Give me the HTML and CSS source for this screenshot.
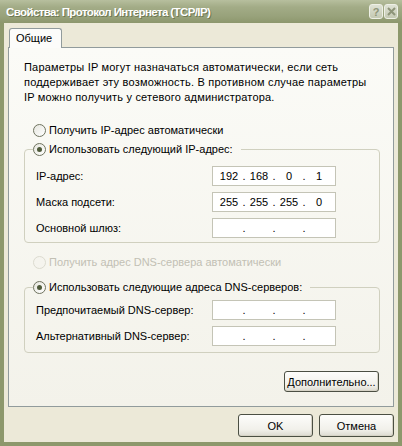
FILE: index.html
```html
<!DOCTYPE html>
<html lang="ru">
<head>
    <meta charset="UTF-8">
    <title>Свойства: Протокол Интернета (TCP/IP)</title>
    <link rel="stylesheet" href="styles.css">
</head>
<body>
    <div class="window">
        <div class="titlebar">
            <span class="title">Свойства: Протокол Интернета (TCP/IP)</span>
            <div class="title-btns">
                <span class="tbtn">?</span>
                <span class="tbtn">
                    <svg width="9" height="9" viewBox="0 0 9 9"><path d="M1 1L8 8M8 1L1 8" stroke="#8d9478" stroke-width="2"/></svg>
                </span>
            </div>
        </div>

        <div class="frame">
            <div class="tabs">
                <div class="tab">Общие</div>
            </div>

            <div class="panel">
                <p class="intro">Параметры IP могут назначаться автоматически, если сеть<br>поддерживает эту возможность. В противном случае параметры<br>IP можно получить у сетевого администратора.</p>

                <label class="radio first"><span class="circle"></span>Получить IP-адрес автоматически</label>

                <fieldset class="group group-ip">
                    <legend><label class="radio"><span class="circle checked"></span>Использовать следующий IP-адрес:</label></legend>
                    <div class="rows">
                        <div class="row">
                            <span>IP-адрес:</span>
                            <div class="ip"><span>192</span><i>.</i><span>168</span><i>.</i><span>0</span><i>.</i><span>1</span></div>
                        </div>
                        <div class="row">
                            <span>Маска подсети:</span>
                            <div class="ip"><span>255</span><i>.</i><span>255</span><i>.</i><span>255</span><i>.</i><span>0</span></div>
                        </div>
                        <div class="row">
                            <span>Основной шлюз:</span>
                            <div class="ip"><span></span><i>.</i><span></span><i>.</i><span></span><i>.</i><span></span></div>
                        </div>
                    </div>
                </fieldset>

                <label class="radio disabled dns-auto"><span class="circle"></span>Получить адрес DNS-сервера автоматически</label>

                <fieldset class="group group-dns">
                    <legend><label class="radio"><span class="circle checked"></span>Использовать следующие адреса DNS-серверов:</label></legend>
                    <div class="rows">
                        <div class="row">
                            <span>Предпочитаемый DNS-сервер:</span>
                            <div class="ip"><span></span><i>.</i><span></span><i>.</i><span></span><i>.</i><span></span></div>
                        </div>
                        <div class="row">
                            <span>Альтернативный DNS-сервер:</span>
                            <div class="ip"><span></span><i>.</i><span></span><i>.</i><span></span><i>.</i><span></span></div>
                        </div>
                    </div>
                </fieldset>

                <div class="more">
                    <button class="btn btn-more">Дополнительно...</button>
                </div>
            </div>

            <div class="actions">
                <button class="btn">OK</button>
                <button class="btn">Отмена</button>
            </div>
        </div>
    </div>
</body>
</html>
```

FILE: styles.css
```css
/* General */
body {
    margin: 0;
    font-family: 'Liberation Sans', Arial, sans-serif;
    font-size: 11px;
    color: #000;
    background: #ece9d8;
}

.window {
    width: 402px;
    height: 446px;
    display: flex;
    flex-direction: column;
    overflow: hidden;
}

/* Title bar */
.titlebar {
    height: 23px;
    flex: none;
    display: flex;
    align-items: center;
    justify-content: space-between;
    padding: 0 4px 0 6px;
    box-sizing: border-box;
    background: linear-gradient(#b7bf9e, #a3ac87 30%, #98a27b 70%, #8d976d);
}

.title {
    font-family: 'Liberation Sans', Arial, sans-serif;
    font-weight: bold;
    font-size: 11.5px;
    letter-spacing: -0.6px;
    color: #fff;
    text-shadow: 1px 1px 0 #6f7853;
    margin-top: 1px;
}

.title-btns {
    display: flex;
    gap: 1px;
}

.tbtn {
    width: 14px;
    height: 15px;
    box-sizing: border-box;
    border: 1px solid #eef0e6;
    border-radius: 3px;
    background: linear-gradient(#dfe2d4, #c4c9b3);
    color: #8d9478;
    font-weight: bold;
    font-size: 11px;
    display: flex;
    align-items: center;
    justify-content: center;
}

/* Frame */
.frame {
    flex: 1;
    border: 4px solid #8d986c;
    border-top: none;
    background: #ece9d8;
}

.tabs {
    display: flex;
    padding: 5px 0 0 5px;
}

.tab {
    position: relative;
    z-index: 1;
    height: 20px;
    line-height: 19px;
    padding: 0 9px 0 6px;
    margin-bottom: -1px;
    border: 1px solid #919b9c;
    border-bottom: none;
    border-radius: 3px 3px 0 0;
    background: #fcfcfa;
    box-sizing: border-box;
}

.panel {
    margin: 0 4px;
    height: 360px;
    box-sizing: border-box;
    border: 1px solid #919b9c;
    background: linear-gradient(#fbfbf7, #f3f2ea);
    padding: 12px 13px 0 15px;
}

.intro {
    margin: 0;
    line-height: 15px;
    letter-spacing: 0.2px;
    white-space: nowrap;
}

/* Radios */
.radio {
    display: flex;
    align-items: center;
    gap: 3px;
    height: 16px;
}

.radio.first {
    margin-top: 17px;
    padding-left: 9px;
}

.circle {
    width: 11px;
    height: 11px;
    border: 1px solid #6f735f;
    border-radius: 50%;
    background: linear-gradient(135deg, #e6e6de, #fff);
    position: relative;
    flex: none;
}

.circle.checked::after {
    content: '';
    position: absolute;
    left: 3px;
    top: 3px;
    width: 5px;
    height: 5px;
    border-radius: 50%;
    background: #4e5a3a;
}

.radio.disabled {
    color: #c2c0b4;
}

.radio.disabled .circle {
    border-color: #dcdbd0;
    background: #f5f4ee;
}

.dns-auto {
    margin-top: 11px;
    padding-left: 9px;
}

/* Group boxes */
.group {
    margin: 3px 0 0;
    padding: 0 0 4px 11px;
    border: 1px solid #d0d0bf;
    border-radius: 4px;
    width: 356px;
    box-sizing: border-box;
}

.group legend {
    padding: 0 8px 0 0;
    margin-left: -3px;
}

.group-dns {
    margin-top: 9px;
    padding-bottom: 6px;
}

.rows {
    display: flex;
    flex-direction: column;
    gap: 6px;
    padding-top: 9px;
}

.group-dns .rows {
    padding-top: 5px;
}

.row {
    display: grid;
    grid-template-columns: 176px 124px;
    align-items: center;
    height: 20px;
}

/* IP input */
.ip {
    height: 20px;
    box-sizing: border-box;
    border: 1px solid #c4c4b6;
    background: #fff;
    display: flex;
    align-items: center;
    padding-left: 4px;
}

.ip span {
    width: 24px;
    text-align: center;
}

.ip i {
    font-style: normal;
    width: 6px;
    text-align: center;
}

/* Buttons */
.btn {
    font-family: 'Liberation Sans', Arial, sans-serif;
    font-size: 11px;
    color: #000;
    width: 75px;
    height: 23px;
    padding: 0;
    border: 1px solid #4b4f43;
    border-radius: 3px;
    background: linear-gradient(#fdfdfb, #f1f0ea 70%, #dcdad0);
    box-shadow: inset -1px -1px 0 #d6d3c6;
}

.more {
    display: flex;
    justify-content: flex-end;
    margin-top: 18px;
    padding-right: 1px;
}

.btn-more {
    width: 95px;
    height: 21px;
}

.actions {
    display: flex;
    justify-content: flex-end;
    gap: 6px;
    padding: 7px 4px 0 0;
}
```
